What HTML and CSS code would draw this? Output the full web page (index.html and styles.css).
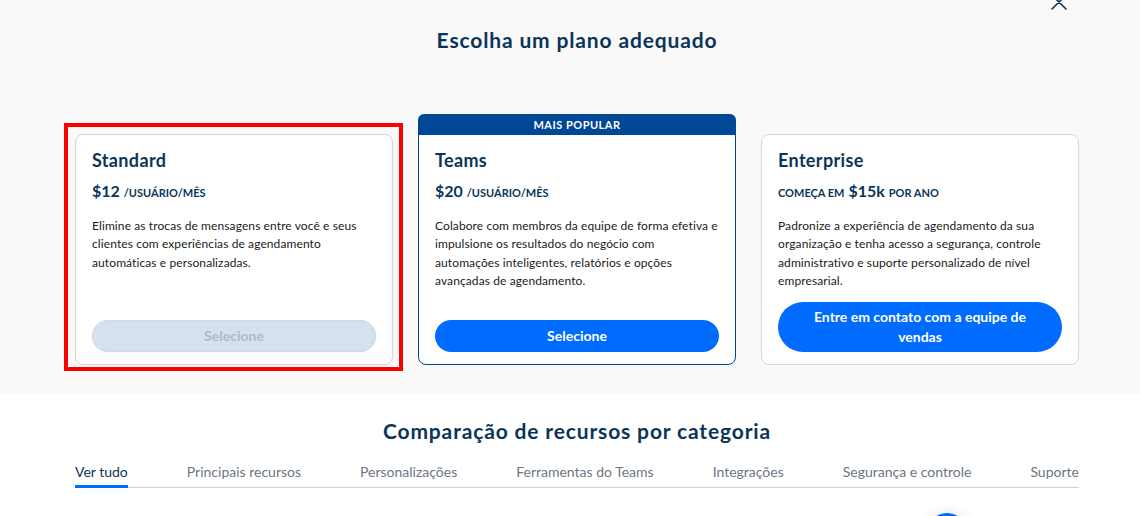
FILE: index.html
```html
<!DOCTYPE html>
<html lang="pt-BR">
<head>
<meta charset="utf-8">
<title>Escolha um plano adequado</title>
<link rel="stylesheet" href="styles.css">
</head>
<body>
<div class="page">
  <button class="close" aria-label="Fechar">
    <svg width="16" height="16" viewBox="0 0 16 16"><path d="M1 1 L15 15 M15 1 L1 15" stroke="#0b3558" stroke-width="1.6" fill="none" stroke-linecap="round"/></svg>
  </button>

  <section class="plans">
    <h1 class="plans-title">Escolha um plano adequado</h1>
    <div class="cards">
      <div class="card">
        <div class="highlight"></div>
        <h3 class="card-title">Standard</h3>
        <p class="price"><span class="amount">$12</span> <span class="unit">/USUÁRIO/MÊS</span></p>
        <p class="desc">Elimine as trocas de mensagens entre você e seus clientes com experiências de agendamento automáticas e personalizadas.</p>
        <button class="btn btn-disabled">Selecione</button>
      </div>
      <div class="card card-popular">
        <div class="badge">MAIS POPULAR</div>
        <h3 class="card-title">Teams</h3>
        <p class="price"><span class="amount">$20</span> <span class="unit">/USUÁRIO/MÊS</span></p>
        <p class="desc">Colabore com membros da equipe de forma efetiva e impulsione os resultados do negócio com automações inteligentes, relatórios e opções avançadas de agendamento.</p>
        <button class="btn btn-primary">Selecione</button>
      </div>
      <div class="card">
        <h3 class="card-title">Enterprise</h3>
        <p class="price"><span class="unit">COMEÇA EM</span> <span class="amount">$15k</span> <span class="unit">POR ANO</span></p>
        <p class="desc">Padronize a experiência de agendamento da sua organização e tenha acesso a segurança, controle administrativo e suporte personalizado de nível empresarial.</p>
        <button class="btn btn-primary btn-tall">Entre em contato com a equipe de vendas</button>
      </div>
    </div>
  </section>

  <section class="compare">
    <h2 class="compare-title">Comparação de recursos por categoria</h2>
    <nav class="tabs">
      <a class="tab active">Ver tudo</a>
      <a class="tab">Principais recursos</a>
      <a class="tab">Personalizações</a>
      <a class="tab">Ferramentas do Teams</a>
      <a class="tab">Integrações</a>
      <a class="tab">Segurança e controle</a>
      <a class="tab">Suporte</a>
    </nav>
  </section>

  <div class="fab"></div>
</div>
</body>
</html>
```

FILE: styles.css
```css
* { box-sizing: border-box; }

html, body {
  margin: 0;
  padding: 0;
  height: 100%;
  overflow: hidden;
}

body {
  font-family: Lato, "Noto Sans", "Liberation Sans", sans-serif;
  color: #1a1a1a;
  background: #ffffff;
}

.page {
  position: relative;
  width: 1140px;
}

.close {
  position: absolute;
  left: 1051px;
  top: -6px;
  width: 16px;
  height: 16px;
  padding: 0;
  border: 0;
  background: none;
  display: block;
}
.close svg { display: block; }

.plans {
  background: #f9f9f9;
  padding: 26px 0 29px;
}

.plans-title {
  margin: 0 0 80px;
  text-align: center;
  padding-left: 14px;
  font-size: 21px;
  line-height: 28px;
  font-weight: 700;
  letter-spacing: 0.85px;
  color: #0b3558;
}

.cards {
  display: grid;
  grid-template-columns: repeat(3, 318px);
  column-gap: 25px;
  margin-left: 75px;
  width: 1004px;
}

.card {
  position: relative;
  display: flex;
  flex-direction: column;
  background: #ffffff;
  border: 1px solid #d4d4d4;
  border-radius: 8px;
  padding: 13px 16px 12px;
}

.card-popular {
  border-color: #004796;
  border-top-left-radius: 0;
  border-top-right-radius: 0;
}

.badge {
  position: absolute;
  top: -21px;
  left: -1px;
  right: -1px;
  height: 21px;
  background: #004796;
  color: #ffffff;
  border-radius: 6px 6px 0 0;
  font-size: 11px;
  font-weight: 700;
  letter-spacing: 0.5px;
  line-height: 21px;
  text-align: center;
}

.highlight {
  position: absolute;
  top: -12px;
  left: -12px;
  right: -11px;
  bottom: -7px;
  border: 4px solid #ff0000;
  pointer-events: none;
}

.card-title {
  margin: 0;
  font-size: 18px;
  line-height: 24px;
  font-weight: 700;
  letter-spacing: 0.35px;
  color: #0b3558;
}

.price {
  margin: 9px 0 0;
  line-height: 20px;
  color: #0b3558;
  font-weight: 700;
}

.amount {
  font-size: 16px;
}

.unit {
  font-size: 11px;
}

.desc {
  margin: 14px 0 11px;
  font-size: 12px;
  line-height: 18.4px;
  letter-spacing: 0.1px;
  color: #1a1a1a;
}

.btn {
  margin-top: auto;
  width: 100%;
  border: 0;
  border-radius: 999px;
  font-family: inherit;
  font-size: 14px;
  font-weight: 700;
  line-height: 20px;
  padding: 6px 24px;
  text-align: center;
}

.btn-primary {
  background: #006bff;
  color: #ffffff;
}

.btn-tall {
  padding: 5px 24px;
}

.btn-disabled {
  background: #d5e1ee;
  color: #a8bbd0;
  box-shadow: inset 0 0 0 1px #cfdbe8;
}

.compare {
  background: #ffffff;
  padding-top: 23px;
}

.compare-title {
  margin: 0;
  text-align: center;
  padding-left: 14px;
  font-size: 21px;
  line-height: 28px;
  font-weight: 700;
  letter-spacing: 0.85px;
  color: #0b3558;
}

.tabs {
  display: flex;
  justify-content: space-between;
  margin: 18px 0 0 75px;
  width: 1004px;
  border-bottom: 1px solid #d0d0d0;
}

.tab {
  font-size: 14px;
  line-height: 18px;
  color: #6b7683;
  padding-bottom: 4px;
  border-bottom: 3px solid transparent;
  margin-bottom: -1px;
}

.tab.active {
  color: #0b3558;
  border-bottom-color: #006bff;
}

.fab {
  position: absolute;
  left: 927px;
  top: 513px;
  width: 40px;
  height: 40px;
  border-radius: 50%;
  background: #006bff;
  box-shadow: 0 0 14px rgba(0, 0, 0, 0.12);
}
```
